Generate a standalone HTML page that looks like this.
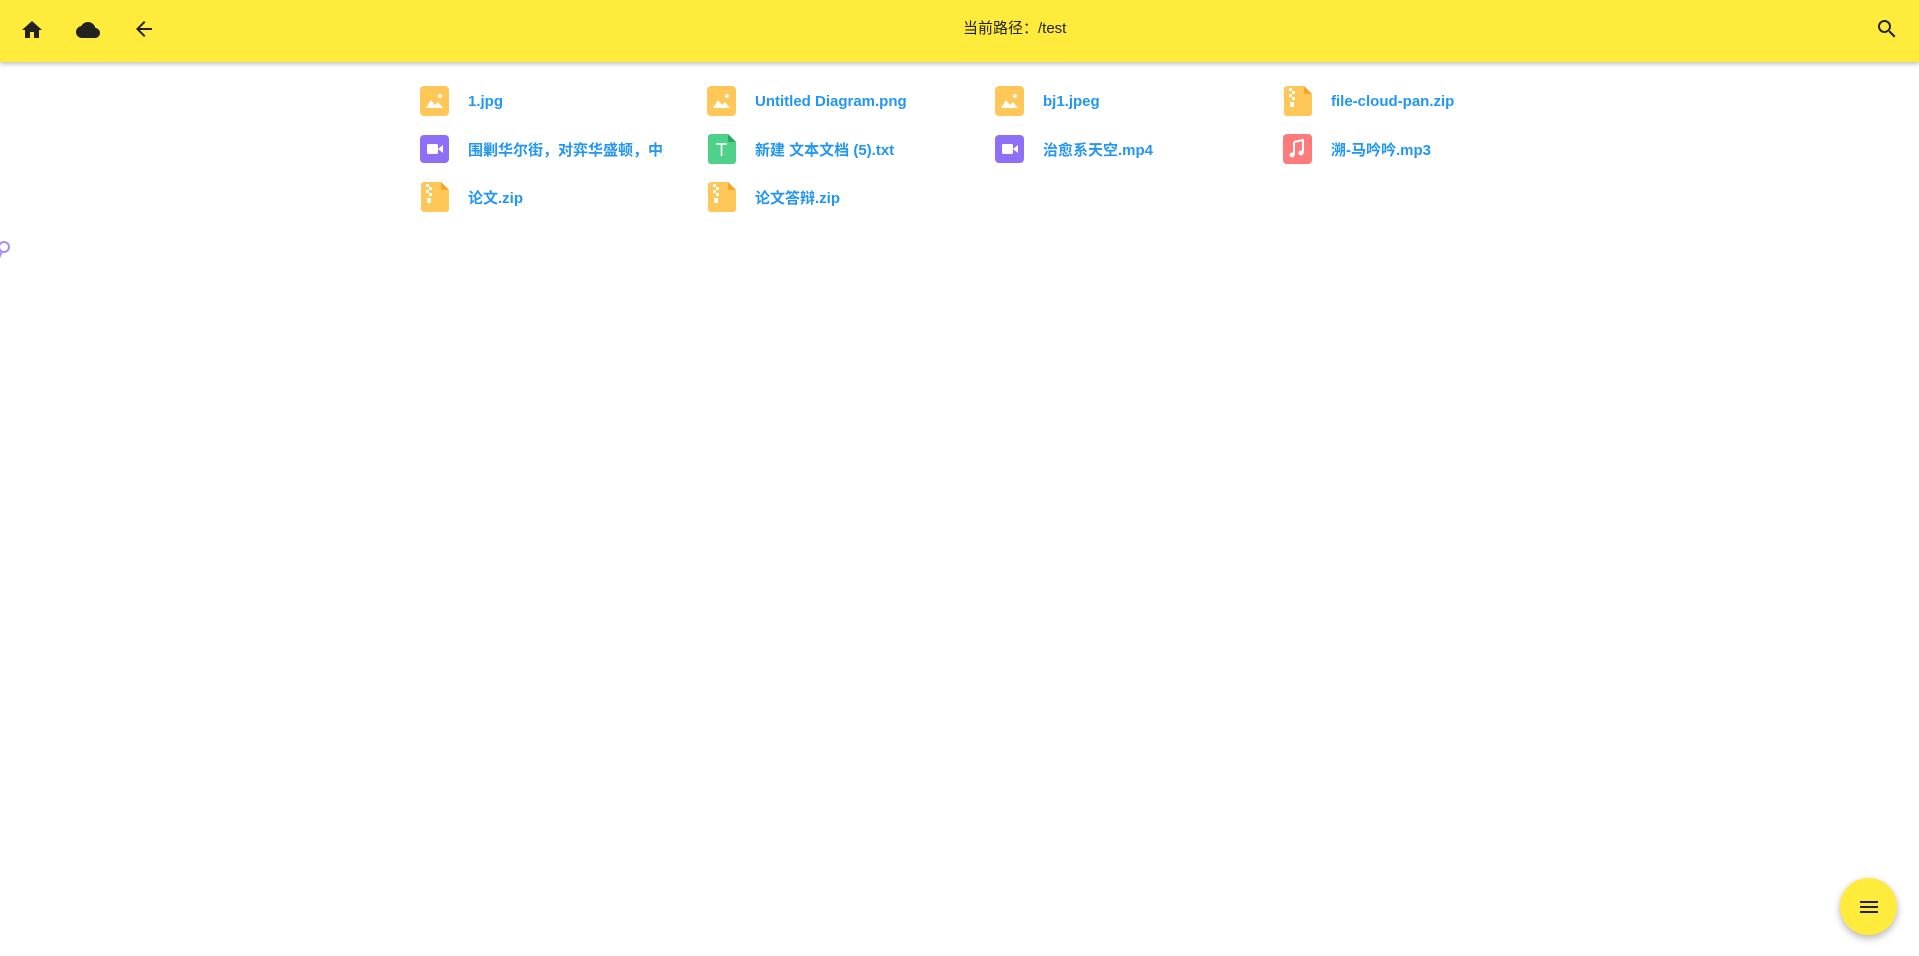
<!DOCTYPE html>
<html><head><meta charset="utf-8"><style>
*{margin:0;padding:0;box-sizing:border-box}
body{width:1919px;height:956px;background:#fff;font-family:"Liberation Sans","Noto Sans CJK SC",sans-serif;position:relative;overflow:hidden}
.hdr{position:absolute;left:0;top:0;width:1919px;height:62px;background:#ffeb3b;box-shadow:0 2px 4px rgba(0,0,0,.25)}
.hdr svg{position:absolute}
.title{position:absolute;left:963px;top:19px;font-size:15px;color:#222;line-height:20px}
.item{position:absolute;height:32px;display:flex;align-items:center}
.item svg{width:29px;height:30px;flex:none}
.item span{margin-left:19px;font-size:15px;font-weight:bold;color:#2196f3;white-space:nowrap;overflow:hidden;max-width:196px}
.fab{position:absolute;left:1840px;top:878px;width:57px;height:57px;border-radius:50%;background:#ffeb3b;box-shadow:0 3px 8px rgba(0,0,0,.3)}
</style></head><body>
<div class="hdr">
<svg style="left:20px;top:18px" width="24" height="24" viewBox="0 0 24 24"><path d="M10 20v-6h4v6h5v-8h3L12 3 2 12h3v8z" fill="#222"/></svg>
<svg style="left:76px;top:18px" width="24" height="24" viewBox="0 0 24 24"><path d="M19.35 10.04A7.49 7.49 0 0 0 12 4C9.11 4 6.6 5.640 5.35 8.04A5.994 5.994 0 0 0 0 14c0 3.31 2.69 6 6 6h13c2.76 0 5-2.240 5-5 0-2.64-2.05-4.78-4.65-4.96z" fill="#222"/></svg>
<svg style="left:132px;top:17px" width="24" height="24" viewBox="0 0 24 24"><path d="M20 11H7.83l5.59-5.59L12 4l-8 8 8 8 1.41-1.41L7.83 13H20v-2z" fill="#222"/></svg>
<div class="title">当前路径：/test</div>
<svg style="left:1875px;top:17px" width="24" height="24" viewBox="0 0 24 24"><path d="M15.5 14h-.79l-.28-.27A6.47 6.47 0 0 0 16 9.5 6.5 6.5 0 1 0 9.5 16c1.61 0 3.09-.59 4.23-1.57l.27.28v.79l5 4.99L20.49 19l-4.99-5zm-6 0C7.01 14 5 11.99 5 9.5S7.01 5 9.5 5 14 7.01 14 9.5 11.99 14 9.5 14z" fill="#222"/></svg>
</div>
<svg style="position:absolute;left:-4px;top:240px" width="16" height="20" viewBox="0 0 16 20"><circle cx="8" cy="7" r="5" fill="none" stroke="#a78bfa" stroke-width="2"/><path d="M6 11l-3 7" stroke="#a78bfa" stroke-width="2"/></svg>

<div class="item" style="left:420px;top:85px"><svg viewBox="0 0 29 30"><rect width="29" height="30" rx="4" fill="#ffc658"/><path d="M6 22l5-8 4 5 3-3 5 6z" fill="#fff"/><circle cx="20" cy="10" r="2" fill="#fff"/></svg><span>1.jpg</span></div>
<div class="item" style="left:707px;top:85px"><svg viewBox="0 0 29 30"><rect width="29" height="30" rx="4" fill="#ffc658"/><path d="M6 22l5-8 4 5 3-3 5 6z" fill="#fff"/><circle cx="20" cy="10" r="2" fill="#fff"/></svg><span>Untitled Diagram.png</span></div>
<div class="item" style="left:995px;top:85px"><svg viewBox="0 0 29 30"><rect width="29" height="30" rx="4" fill="#ffc658"/><path d="M6 22l5-8 4 5 3-3 5 6z" fill="#fff"/><circle cx="20" cy="10" r="2" fill="#fff"/></svg><span>bj1.jpeg</span></div>
<div class="item" style="left:1283px;top:85px"><svg viewBox="0 0 29 30"><path d="M4 0h17l8 8v19a3 3 0 0 1-3 3H4a3 3 0 0 1-3-3V3a3 3 0 0 1 3-3z" fill="#ffc658"/><path d="M21 0l8 8h-6a2 2 0 0 1-2-2z" fill="#f5a623"/><rect x="6" y="2" width="3" height="3" fill="#fff"/><rect x="9" y="5" width="3" height="3" fill="#fff"/><rect x="6" y="8" width="3" height="3" fill="#fff"/><rect x="9" y="11" width="3" height="3" fill="#fff"/><rect x="7" y="16" width="4" height="5" fill="#fff"/></svg><span>file-cloud-pan.zip</span></div>

<div class="item" style="left:420px;top:133px"><svg viewBox="0 0 29 30"><rect width="29" height="28" y="1" rx="4" fill="#8f6ff7"/><rect x="7" y="10" width="11" height="10" rx="1.5" fill="#fff"/><path d="M18 15l5-4v8z" fill="#fff"/></svg><span>围剿华尔街，对弈华盛顿，中美之间</span></div>
<div class="item" style="left:707px;top:133px"><svg viewBox="0 0 29 30"><path d="M4 0h17l8 8v19a3 3 0 0 1-3 3H4a3 3 0 0 1-3-3V3a3 3 0 0 1 3-3z" fill="#4fd18b"/><path d="M21 0l8 8h-6a2 2 0 0 1-2-2z" fill="#27a862"/><path d="M9 10h11M14.5 10v12" stroke="#fff" stroke-width="1.6"/></svg><span>新建 文本文档 (5).txt</span></div>
<div class="item" style="left:995px;top:133px"><svg viewBox="0 0 29 30"><rect width="29" height="28" y="1" rx="4" fill="#8f6ff7"/><rect x="7" y="10" width="11" height="10" rx="1.5" fill="#fff"/><path d="M18 15l5-4v8z" fill="#fff"/></svg><span>治愈系天空.mp4</span></div>
<div class="item" style="left:1283px;top:133px"><svg viewBox="0 0 29 30"><rect width="29" height="30" rx="4" fill="#ff7a7a"/><path d="M11 8l9-2v13" stroke="#fff" stroke-width="2" fill="none"/><path d="M11 8v13" stroke="#fff" stroke-width="2"/><circle cx="9" cy="21" r="2.5" fill="#fff"/><circle cx="18" cy="19" r="2.5" fill="#fff"/></svg><span>溯-马吟吟.mp3</span></div>

<div class="item" style="left:420px;top:181px"><svg viewBox="0 0 29 30"><path d="M4 0h17l8 8v19a3 3 0 0 1-3 3H4a3 3 0 0 1-3-3V3a3 3 0 0 1 3-3z" fill="#ffc658"/><path d="M21 0l8 8h-6a2 2 0 0 1-2-2z" fill="#f5a623"/><rect x="6" y="2" width="3" height="3" fill="#fff"/><rect x="9" y="5" width="3" height="3" fill="#fff"/><rect x="6" y="8" width="3" height="3" fill="#fff"/><rect x="9" y="11" width="3" height="3" fill="#fff"/><rect x="7" y="16" width="4" height="5" fill="#fff"/></svg><span>论文.zip</span></div>
<div class="item" style="left:707px;top:181px"><svg viewBox="0 0 29 30"><path d="M4 0h17l8 8v19a3 3 0 0 1-3 3H4a3 3 0 0 1-3-3V3a3 3 0 0 1 3-3z" fill="#ffc658"/><path d="M21 0l8 8h-6a2 2 0 0 1-2-2z" fill="#f5a623"/><rect x="6" y="2" width="3" height="3" fill="#fff"/><rect x="9" y="5" width="3" height="3" fill="#fff"/><rect x="6" y="8" width="3" height="3" fill="#fff"/><rect x="9" y="11" width="3" height="3" fill="#fff"/><rect x="7" y="16" width="4" height="5" fill="#fff"/></svg><span>论文答辩.zip</span></div>

<div class="fab"><svg style="position:absolute;left:17px;top:17px" width="24" height="24" viewBox="0 0 24 24"><path d="M3 18h18v-2H3v2zm0-5h18v-2H3v2zm0-7v2h18V6H3z" fill="#222"/></svg></div>
</body></html>
